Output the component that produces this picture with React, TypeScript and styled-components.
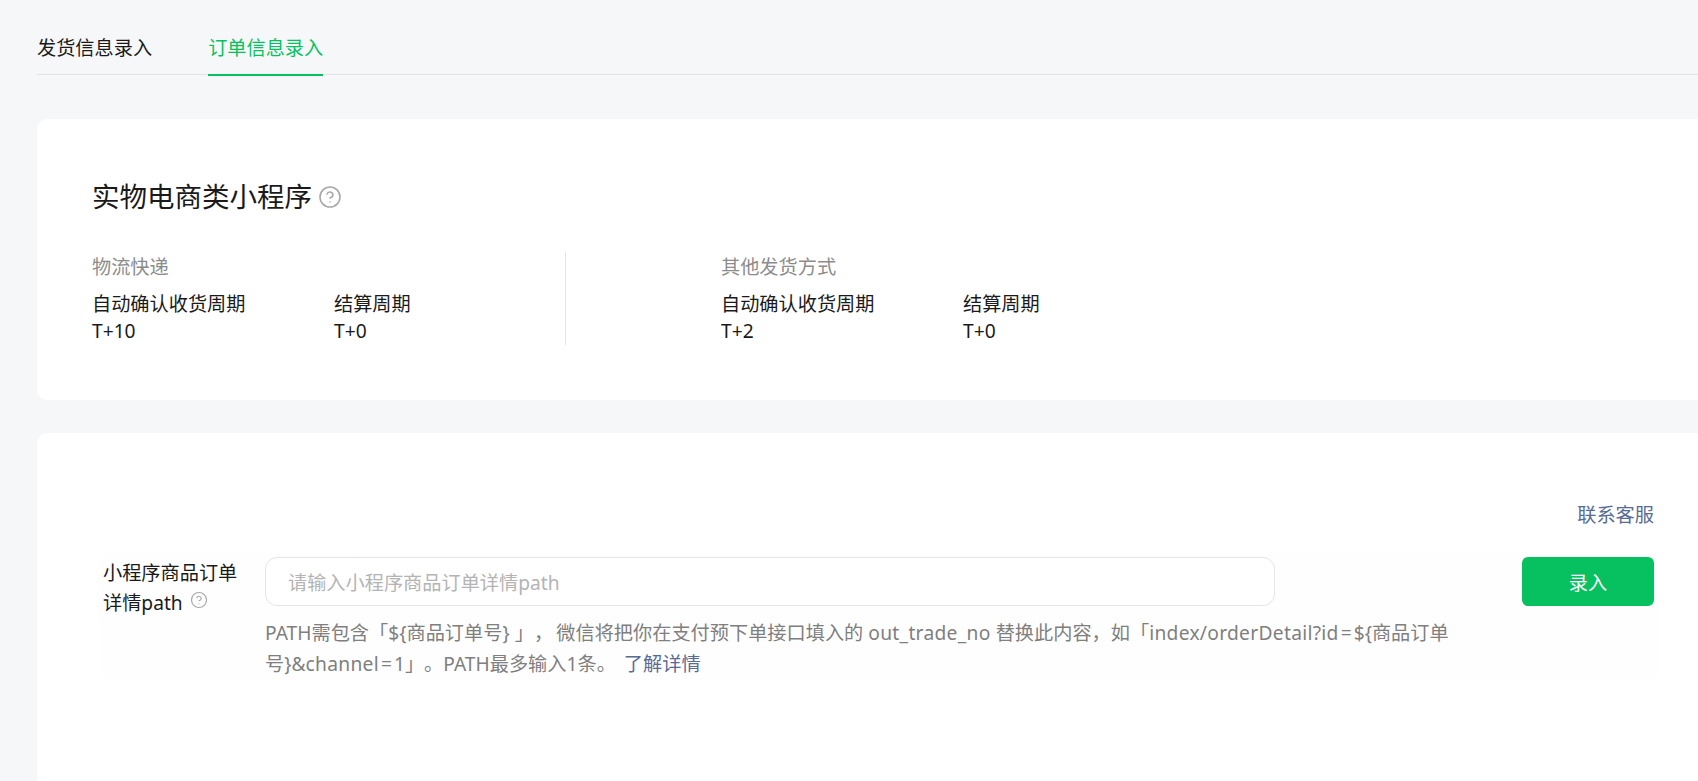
import React from "react";
import styled, { createGlobalStyle } from "styled-components";
import { CircleHelp } from "lucide-react";

const GlobalStyle = createGlobalStyle`
  html, body {
    margin: 0;
    height: 100%;
    overflow: hidden;
    background: #f6f7f9;
    font-family: "Noto Sans", "Noto Sans CJK SC", sans-serif;
    font-size: 19.2px;
    color: #1a1a1a;
    text-spacing-trim: space-all;
  }
`;

const Page = styled.div`
  padding-left: 37px;
  width: 1800px;
`;

const Tabs = styled.div`
  display: flex;
  gap: 56px;
  height: 75px;
  border-bottom: 1px solid #e2e3e5;
  box-sizing: border-box;
  margin-bottom: 44px;
`;

const Tab = styled.div<{ $active?: boolean }>`
  height: 76px;
  box-sizing: border-box;
  padding-top: 34px;
  line-height: 28px;
  color: ${(p) => (p.$active ? "#07c160" : "#1a1a1a")};
  border-bottom: 2px solid ${(p) => (p.$active ? "#07c160" : "transparent")};
`;

const Card = styled.section`
  background: #fff;
  border-radius: 10px;
`;

const InfoCard = styled(Card)`
  height: 281px;
  padding: 56px 55px 0;
  margin-bottom: 33px;
  box-sizing: border-box;
`;

const Title = styled.h2`
  margin: 0 0 33px;
  display: flex;
  align-items: center;
  gap: 6px;
  font-size: 27.5px;
  font-weight: 400;
  line-height: 44px;
`;

const HelpIcon = styled(CircleHelp)<{ $size: number }>`
  width: ${(p) => p.$size}px;
  height: ${(p) => p.$size}px;
  color: #a8a8a8;
  stroke-width: 1.6;
  flex: none;
`;

const LabelHelp = styled(HelpIcon)`
  vertical-align: 1px;
  margin-left: 2px;
`;

const Columns = styled.div`
  display: flex;
`;

const Section = styled.div`
  width: 473px;
  height: 93px;
  & + & {
    padding-left: 155px;
    border-left: 1px solid #e5e5e5;
  }
`;

const SectionLabel = styled.div`
  color: #8c8c8c;
  line-height: 30px;
  margin-bottom: 8px;
`;

const Stats = styled.div`
  display: grid;
  grid-template-columns: 242px 242px;
  line-height: 27px;
`;

const FormCard = styled(Card)`
  height: 500px;
  padding: 66px 0 0 63px;
  box-sizing: border-box;
`;

const Inner = styled.div`
  width: 1557px;
`;

const Contact = styled.div`
  text-align: right;
  color: #576b95;
  line-height: 32px;
  margin-bottom: 21px;
  padding-right: 3px;
`;

const FormRow = styled.div`
  display: flex;
  background: #fefefe;
  border-radius: 6px;
  height: 128px;
  padding: 5px 3px 0 3px;
  box-sizing: border-box;
`;

const FieldLabel = styled.label`
  width: 162px;
  flex: none;
  line-height: 30px;
  padding-top: 1px;
`;

const Body = styled.div`
  flex: 1;
  min-width: 0;
`;

const InputRow = styled.div`
  display: flex;
  justify-content: space-between;
  margin-bottom: 12px;
`;

const Input = styled.input`
  width: 1010px;
  height: 49px;
  box-sizing: border-box;
  border: 1px solid #e5e5e5;
  border-radius: 12px;
  padding: 1px 22px 0;
  font: inherit;
  background: #fff;
  outline: none;
  &::placeholder {
    color: #b4b4b4;
  }
`;

const SubmitButton = styled.button`
  width: 132px;
  height: 49px;
  border: 0;
  border-radius: 6px;
  padding-top: 1px;
  background: #07c160;
  color: #fff;
  font: inherit;
`;

const Hint = styled.p`
  margin: -1px 0 0;
  width: 1200px;
  color: #7f7f7f;
  line-height: 31px;
`;

const Latin = styled.span`
  letter-spacing: 0.3px;
`;

const HintLink = styled.a`
  color: #576b95;
  margin-left: 3px;
`;

const Equals = styled.span`
  margin: 0 2px;
`;

const stats = [
  { name: "物流快递", cycle: "T+10" },
  { name: "其他发货方式", cycle: "T+2" },
];

export default function App() {
  return (
    <Page>
      <GlobalStyle />
      <Tabs>
        <Tab>发货信息录入</Tab>
        <Tab $active>订单信息录入</Tab>
      </Tabs>
      <InfoCard>
        <Title>
          实物电商类小程序
          <HelpIcon $size={24} />
        </Title>
        <Columns>
          {stats.map((s) => (
            <Section key={s.name}>
              <SectionLabel>{s.name}</SectionLabel>
              <Stats>
                <div>自动确认收货周期</div>
                <div>结算周期</div>
                <div>{s.cycle}</div>
                <div>T+0</div>
              </Stats>
            </Section>
          ))}
        </Columns>
      </InfoCard>
      <FormCard>
        <Inner>
          <Contact>联系客服</Contact>
          <FormRow>
            <FieldLabel>
              小程序商品订单
              <br />
              详情path <LabelHelp $size={18} />
            </FieldLabel>
            <Body>
              <InputRow>
                <Input placeholder="请输入小程序商品订单详情path" />
                <SubmitButton>录入</SubmitButton>
              </InputRow>
              <Hint>
                PATH需包含「${"{"}商品订单号{"}"} 」，{"\u2009"}微信将把你在支付预下单接口填入的 <Latin>out_trade_no</Latin> 替换此内容，如「<Latin>index/orderDetail?id</Latin><Equals>=</Equals>${"{"}商品订单
                <br />
                号{"}"}&amp;<Latin>channel</Latin><Equals>=</Equals>1」。PATH最多输入1条。 <HintLink>了解详情</HintLink>
              </Hint>
            </Body>
          </FormRow>
        </Inner>
      </FormCard>
    </Page>
  );
}
